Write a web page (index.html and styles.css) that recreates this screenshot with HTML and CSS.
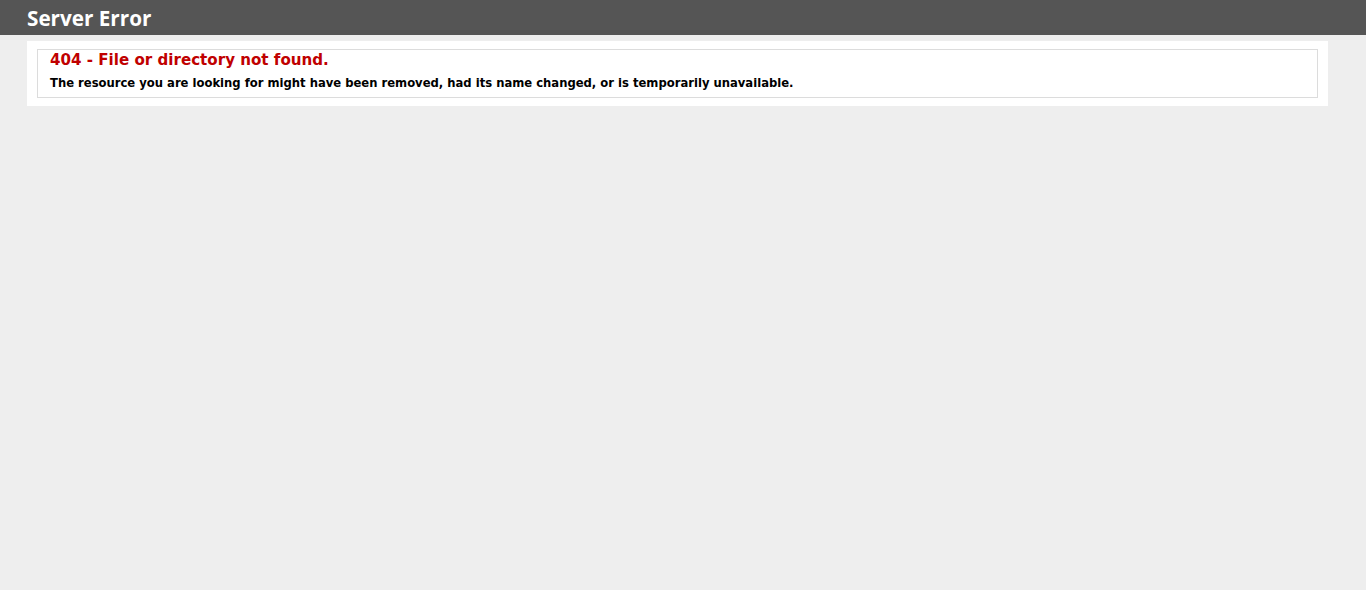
FILE: index.html
```html
<!DOCTYPE html>
<html>
<head>
<meta charset="utf-8">
<title>404 - File or directory not found.</title>
<link rel="stylesheet" href="styles.css">
</head>
<body>
<div class="header"><h1 class="title">Server Error</h1></div>
<div class="content">
  <div class="content-container">
    <fieldset class="box">
      <h2 class="error-title">404 - File or directory not found.</h2>
      <h3 class="error-text">The resource you are looking for might have been removed, had its name changed, or is temporarily unavailable.</h3>
    </fieldset>
  </div>
</div>
</body>
</html>
```

FILE: styles.css
```css
html, body {
  margin: 0;
  padding: 0;
}
body {
  background: #eeeeee;
  font-family: "DejaVu Sans", Verdana, sans-serif;
}
.header {
  background: #555555;
  height: 35px;
  box-sizing: border-box;
  padding: 5px 0 0 27px;
}
.title {
  margin: 0;
  color: #ffffff;
  font-family: "Open Sans", "DejaVu Sans", sans-serif;
  font-weight: 700;
  font-size: 20.7px;
  line-height: 26px;
}
.content {
  padding: 6px 38px 0 27px;
}
.content-container {
  background: #ffffff;
  padding: 8px 10px;
}
.box {
  margin: 0;
  border: 1px solid #dcdcdc;
  padding: 0 12px 7px 12px;
}
.error-title {
  margin: 0;
  color: #c00000;
  font-size: 15.1px;
  line-height: 20px;
  font-weight: 700;
}
.error-text {
  margin: 6px 0 0 0;
  color: #000000;
  font-size: 11.6px;
  line-height: 14px;
  font-weight: 700;
}
```
